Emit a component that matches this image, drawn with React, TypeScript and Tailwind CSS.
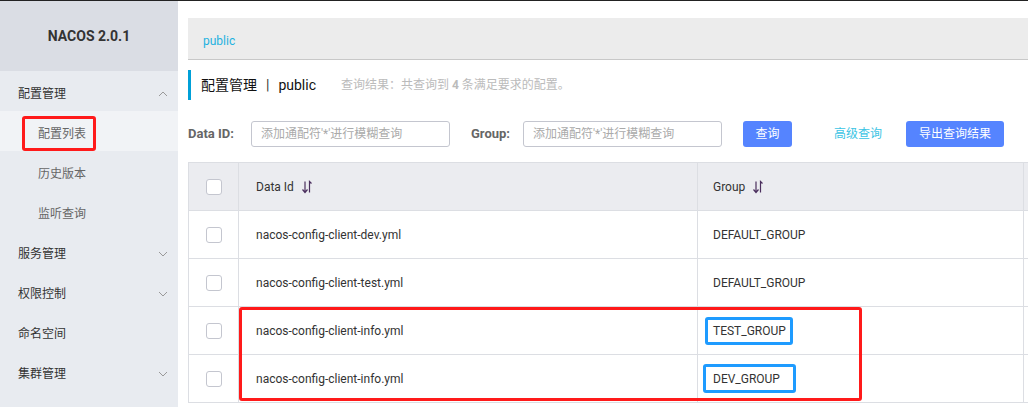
import React from 'react';

const font = { fontFamily: 'Roboto, "Noto Sans CJK SC", sans-serif' };

const ChevronUp = () => (
  <svg width="10" height="6" viewBox="0 0 10 6" className="text-[#999]">
    <path d="M1 5 L5 1 L9 5" fill="none" stroke="currentColor" strokeWidth="1" />
  </svg>
);

const ChevronDown = () => (
  <svg width="10" height="6" viewBox="0 0 10 6" className="text-[#999]">
    <path d="M1 1 L5 5 L9 1" fill="none" stroke="currentColor" strokeWidth="1" />
  </svg>
);

const SortIcon = () => (
  <svg width="12" height="14" viewBox="0 0 12 14" className="ml-[7px] text-[#4b2f5e]">
    <path d="M4 1.5 V12 M1.5 9.5 L4 12.5 L6.5 9.5" fill="none" stroke="currentColor" strokeWidth="1.2" />
    <path d="M8.5 12.5 V1.5 L10.5 3.5" fill="none" stroke="currentColor" strokeWidth="1.2" />
  </svg>
);

const Checkbox = () => (
  <span className="block w-[16px] h-[16px] rounded-[3px] border border-[#c4c6cf] bg-white" />
);

interface NavItem {
  label: string;
  sub?: boolean;
  active?: boolean;
  chevron?: 'up' | 'down';
}

const navItems: NavItem[] = [
  { label: '配置管理', chevron: 'up' },
  { label: '配置列表', sub: true, active: true },
  { label: '历史版本', sub: true },
  { label: '监听查询', sub: true },
  { label: '服务管理', chevron: 'down' },
  { label: '权限控制', chevron: 'down' },
  { label: '命名空间' },
  { label: '集群管理', chevron: 'down' },
];

const rows = [
  { id: 'nacos-config-client-dev.yml', group: 'DEFAULT_GROUP' },
  { id: 'nacos-config-client-test.yml', group: 'DEFAULT_GROUP' },
  { id: 'nacos-config-client-info.yml', group: 'TEST_GROUP', box: 'test' },
  { id: 'nacos-config-client-info.yml', group: 'DEV_GROUP', box: 'dev' },
];

const Sidebar = () => (
  <aside className="w-[178px] shrink-0 bg-[#e8ebf0] flex flex-col">
    <div className="h-[70px] bg-[#dadde4] flex items-center justify-center text-[14px] font-bold text-[#333]">
      NACOS 2.0.1
    </div>
    {navItems.map((item, i) => (
      <div
        key={i}
        className={`h-[40px] flex items-center justify-between pr-[10px] pt-[6px] text-[12px] ${
          item.sub ? 'pl-[38px] text-[#666]' : 'pl-[18px] text-[#333]'
        } ${item.active ? 'bg-[#f1f3f6]' : ''}`}
      >
        <span className="relative">
          {item.label}
          {item.active && (
            <span className="absolute -left-[16px] -top-[9px] w-[74px] h-[35px] border-[3px] border-[#ff1a1a] rounded-[3px]" />
          )}
        </span>
        {item.chevron === 'up' && <ChevronUp />}
        {item.chevron === 'down' && <ChevronDown />}
      </div>
    ))}
  </aside>
);

const Main = () => (
  <main className="flex-1 min-w-0 overflow-hidden pl-[10px] pt-[17px]">
    <div className="h-[42px] bg-[#ececec] border-b border-[#c8c8c8] flex items-center pl-[15px] pt-[4px] text-[12px] text-[#1fb2e0] w-[900px]">
      public
    </div>

    <div className="mt-[10px] h-[30px] border-l-[3px] border-[#00a0d8] flex items-center pl-[10px] whitespace-nowrap">
      <span className="text-[14px] text-[#111]">配置管理</span>
      <span className="text-[14px] text-[#333] mx-[9px]">|</span>
      <span className="text-[14px] text-[#111]">public</span>
      <span className="ml-[25px] text-[12px] text-[#bbb]">
        查询结果：共查询到 <b className="font-bold">4</b> 条满足要求的配置。
      </span>
    </div>

    <div className="mt-[21px] h-[26px] flex items-center whitespace-nowrap">
      <span className="text-[13px] font-bold text-[#666] w-[63px]">Data ID:</span>
      <div className="w-[199px] h-[26px] border border-[#c4c6cf] rounded-[3px] flex items-center pl-[9px] text-[12px] text-[#aaa]">
        添加通配符'*'进行模糊查询
      </div>
      <span className="ml-[21px] text-[13px] font-bold text-[#666] w-[52px]">Group:</span>
      <div className="w-[199px] h-[26px] border border-[#c4c6cf] rounded-[3px] flex items-center pl-[9px] text-[12px] text-[#aaa]">
        添加通配符'*'进行模糊查询
      </div>
      <button className="ml-[21px] w-[49px] h-[26px] rounded-[3px] bg-[#5584ff] text-white text-[12px]">查询</button>
      <span className="ml-[42px] text-[12px] text-[#3cc4e4]">高级查询</span>
      <button className="ml-[24px] w-[98px] h-[26px] rounded-[3px] bg-[#5584ff] text-white text-[12px]">导出查询结果</button>
    </div>

    <div className="mt-[15px] w-[900px] border-l border-t border-[#dcdee3] relative">
      <div className="flex h-[48px] bg-[#ebecf0] border-b border-[#dcdee3] text-[12px] text-[#333]">
        <div className="w-[50px] shrink-0 border-r border-[#dcdee3] flex items-center justify-center">
          <Checkbox />
        </div>
        <div className="w-[459px] shrink-0 border-r border-[#dcdee3] flex items-center pl-[17px]">
          Data Id <SortIcon />
        </div>
        <div className="w-[326px] shrink-0 border-r border-[#dcdee3] flex items-center pl-[15px]">
          Group <SortIcon />
        </div>
        <div className="flex-1" />
      </div>
      {rows.map((r, i) => (
        <div key={i} className="flex h-[48px] border-b border-[#dcdee3] text-[12px] text-[#333]">
          <div className="w-[50px] shrink-0 border-r border-[#dcdee3] flex items-center justify-center">
            <Checkbox />
          </div>
          <div className="w-[459px] shrink-0 border-r border-[#dcdee3] flex items-center pl-[17px]">{r.id}</div>
          <div className="w-[326px] shrink-0 border-r border-[#dcdee3] flex items-center pl-[15px] relative">
            {r.group}
            {r.box === 'test' && (
              <span className="absolute left-[7px] top-[10px] w-[88px] h-[28px] border-[3px] border-[#1e9bff] rounded-[3px]" />
            )}
            {r.box === 'dev' && (
              <span className="absolute left-[5px] top-[9px] w-[93px] h-[29px] border-[3px] border-[#1e9bff] rounded-[3px]" />
            )}
          </div>
          <div className="flex-1" />
        </div>
      ))}
      <div className="absolute left-[50px] top-[144px] w-[623px] h-[94px] border-[3px] border-[#ff1a1a] rounded-[3px]" />
    </div>
  </main>
);

export default function App() {
  return (
    <div className="w-[1028px] h-[407px] overflow-hidden bg-white flex border-t border-[#222]" style={font}>
      <Sidebar />
      <Main />
    </div>
  );
}
